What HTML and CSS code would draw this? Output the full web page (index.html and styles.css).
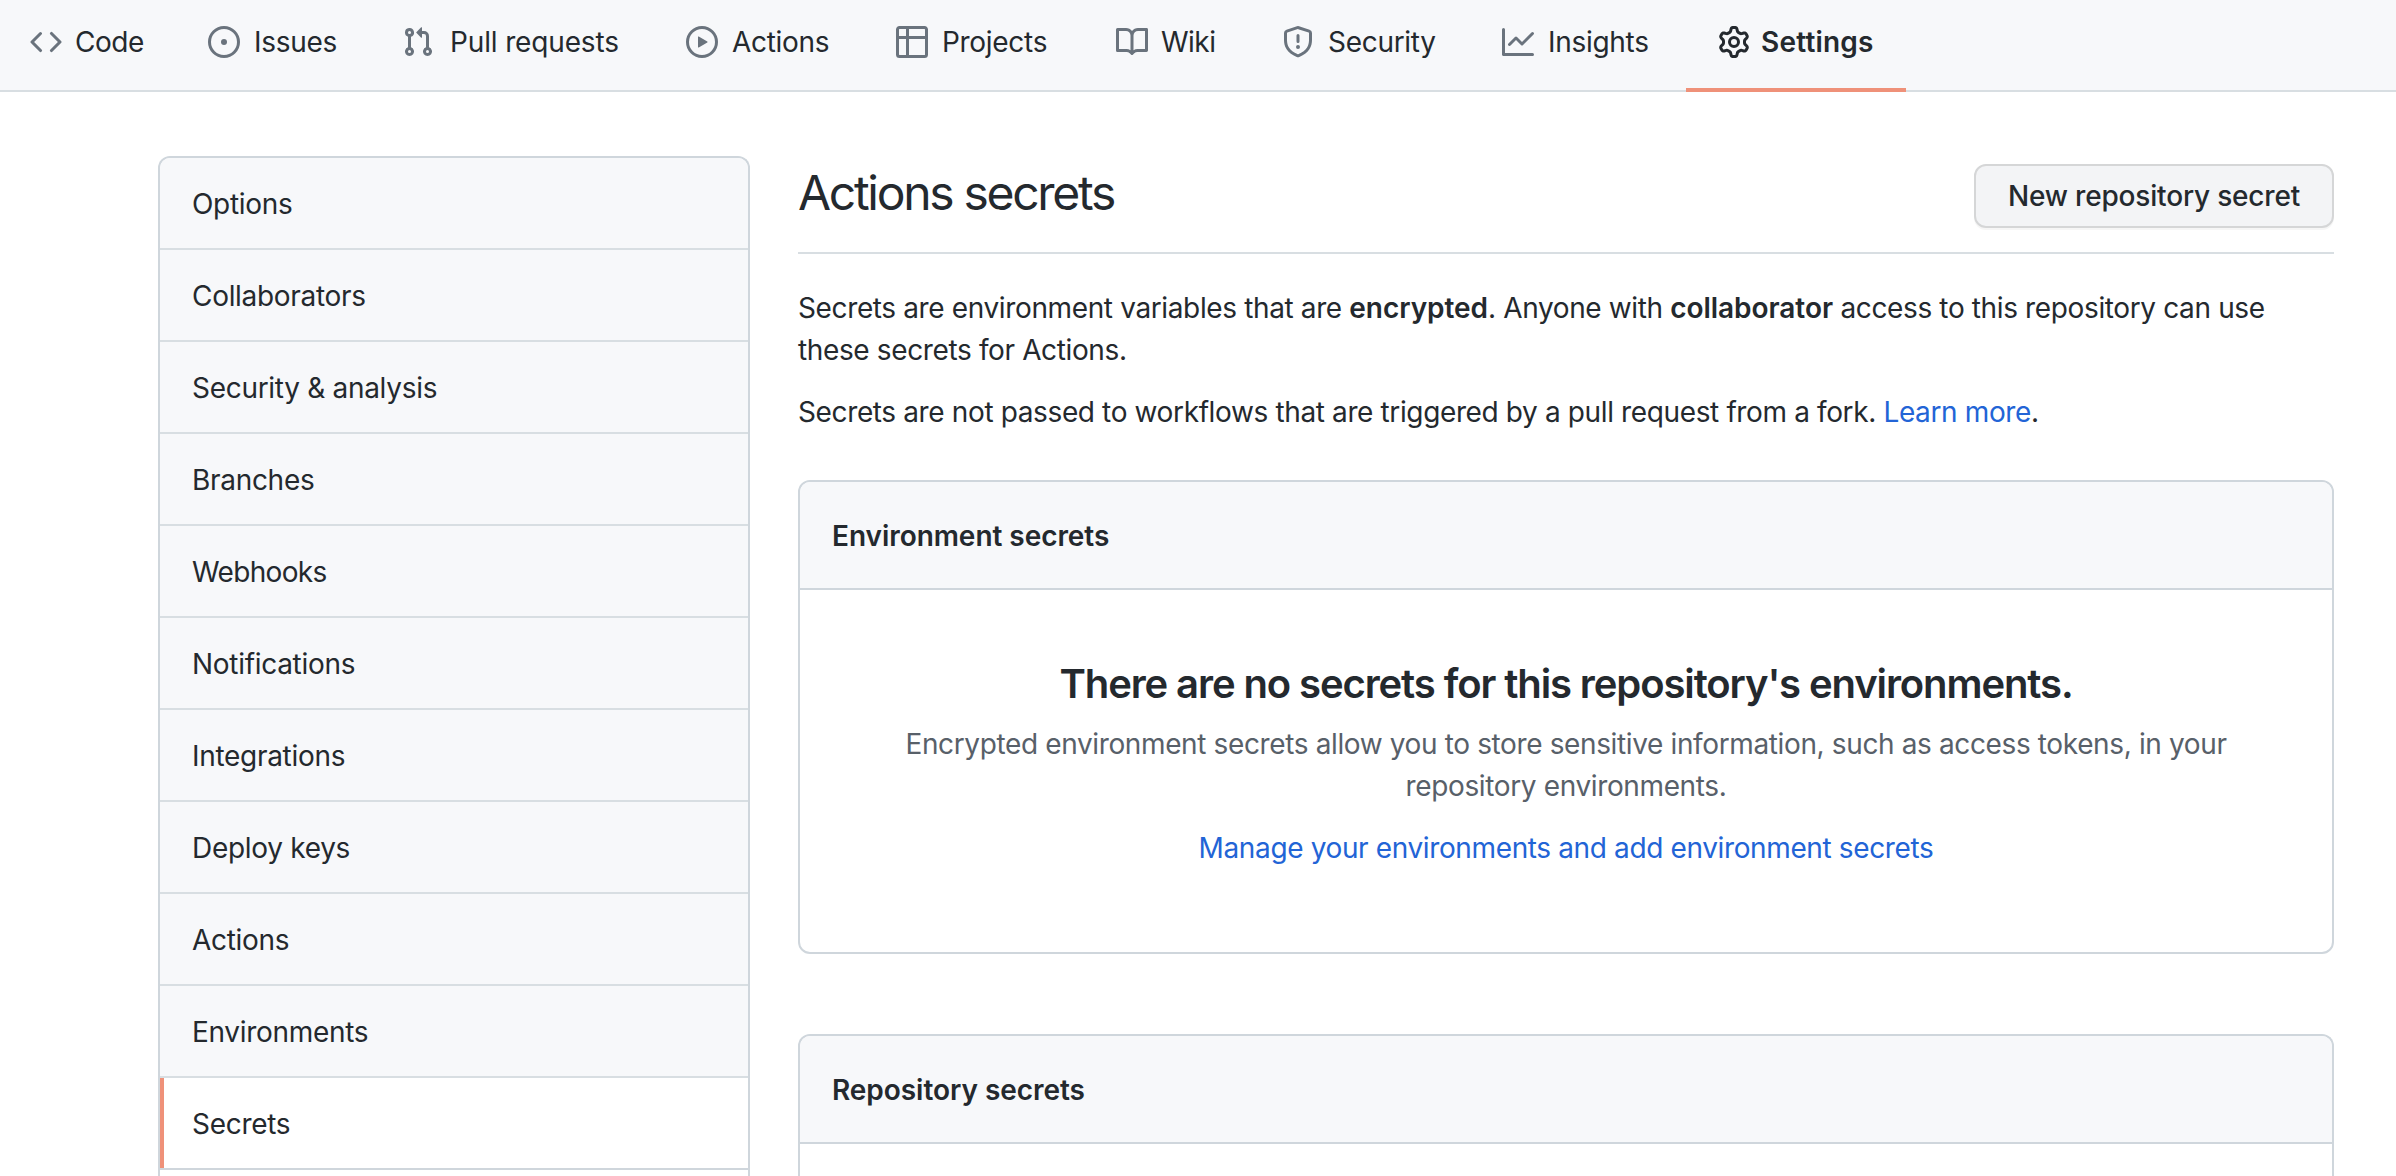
FILE: index.html
```
<!DOCTYPE html>
<html lang="en">
<head>
<meta charset="utf-8">
<title>Actions secrets</title>
<link rel="stylesheet" href="styles.css">
</head>
<body>
<nav class="repo-nav">
  <a class="tab tab-code"><svg class="icon" viewBox="0 0 16 16"><path fill-rule="evenodd" d="M4.72 3.22a.75.75 0 011.06 1.06L2.06 8l3.72 3.72a.75.75 0 11-1.06 1.06L.47 8.53a.75.75 0 010-1.06l4.25-4.25zm6.56 0a.75.75 0 10-1.06 1.06L13.94 8l-3.72 3.72a.75.75 0 101.06 1.06l4.25-4.25a.75.75 0 000-1.06l-4.25-4.25z"/></svg><span>Code</span></a>
  <a class="tab"><svg class="icon" viewBox="0 0 16 16"><path d="M8 9.5a1.5 1.5 0 100-3 1.5 1.5 0 000 3z"/><path fill-rule="evenodd" d="M8 0a8 8 0 100 16A8 8 0 008 0zM1.5 8a6.5 6.5 0 1113 0 6.5 6.5 0 01-13 0z"/></svg><span>Issues</span></a>
  <a class="tab tab-pulls"><svg class="icon" viewBox="0 0 16 16"><path fill-rule="evenodd" d="M7.177 3.073L9.573.677A.25.25 0 0110 .854v4.792a.25.25 0 01-.427.177L7.177 3.427a.25.25 0 010-.354zM3.75 2.5a.75.75 0 100 1.5.75.75 0 000-1.5zm-2.25.75a2.25 2.25 0 113 2.122v5.256a2.251 2.251 0 11-1.5 0V5.372A2.25 2.25 0 011.5 3.25zM11 2.5h-1V4h1a1 1 0 011 1v5.628a2.251 2.251 0 101.5 0V5A2.5 2.5 0 0011 2.5zm1 10.25a.75.75 0 111.5 0 .75.75 0 01-1.5 0zM3.75 12a.75.75 0 100 1.5.75.75 0 000-1.5z"/></svg><span>Pull requests</span></a>
  <a class="tab"><svg class="icon" viewBox="0 0 16 16"><path fill-rule="evenodd" d="M1.5 8a6.5 6.5 0 1113 0 6.5 6.5 0 01-13 0zM8 0a8 8 0 100 16A8 8 0 008 0zM6.379 5.227A.25.25 0 006 5.442v5.117a.25.25 0 00.379.214l4.264-2.559a.25.25 0 000-.428L6.379 5.227z"/></svg><span>Actions</span></a>
  <a class="tab"><svg class="icon" viewBox="0 0 16 16"><path fill-rule="evenodd" d="M0 1.75C0 .784.784 0 1.75 0h12.5C15.216 0 16 .784 16 1.75v3.585a.746.746 0 010 .83v8.085A1.75 1.75 0 0114.25 16H6.309a.748.748 0 01-1.118 0H1.75A1.75 1.75 0 010 14.25V6.165a.746.746 0 010-.83V1.75zM1.5 6.5v7.75c0 .138.112.25.25.25H5v-8H1.5zM5 5H1.5V1.75a.25.25 0 01.25-.25H5V5zm1.5 1.5v8h7.75a.25.25 0 00.25-.25V6.5h-8zM14.5 5h-8V1.5h7.75a.25.25 0 01.25.25V5z"/></svg><span>Projects</span></a>
  <a class="tab tab-wiki"><svg class="icon" viewBox="0 0 16 16"><path fill-rule="evenodd" d="M0 1.75A.75.75 0 01.75 1h4.253c1.227 0 2.317.59 3 1.501A3.744 3.744 0 0111.006 1h4.245a.75.75 0 01.75.75v10.5a.75.75 0 01-.75.75h-4.507a2.25 2.25 0 00-1.591.659l-.622.621a.75.75 0 01-1.06 0l-.622-.621A2.25 2.25 0 005.258 13H.75a.75.75 0 01-.75-.75V1.75zm8.755 3a2.25 2.25 0 012.25-2.25H14.5v9h-3.757c-.71 0-1.4.201-1.992.572l.004-7.322zm-1.504 7.324l.004-5.073-.002-2.253A2.25 2.25 0 005.003 2.5H1.5v9h3.757a3.75 3.75 0 011.994.574z"/></svg><span>Wiki</span></a>
  <a class="tab"><svg class="icon" viewBox="0 0 16 16"><path fill-rule="evenodd" d="M7.467.133a1.75 1.75 0 011.066 0l5.25 1.68A1.75 1.75 0 0115 3.48V7c0 1.566-.32 3.182-1.303 4.682-.983 1.498-2.585 2.813-5.032 3.855a1.7 1.7 0 01-1.33 0c-2.447-1.042-4.049-2.357-5.032-3.855C1.32 10.182 1 8.566 1 7V3.48a1.75 1.75 0 011.217-1.667l5.25-1.68zm.61 1.429a.25.25 0 00-.153 0l-5.25 1.68a.25.25 0 00-.174.238V7c0 1.358.275 2.666 1.057 3.86.784 1.194 2.121 2.34 4.366 3.297a.2.2 0 00.154 0c2.245-.956 3.582-2.104 4.366-3.298C13.225 9.666 13.5 8.36 13.5 7V3.48a.25.25 0 00-.174-.237l-5.25-1.68zM9 10.5a1 1 0 11-2 0 1 1 0 012 0zm-.25-5.75a.75.75 0 10-1.5 0v3a.75.75 0 001.5 0v-3z"/></svg><span>Security</span></a>
  <a class="tab"><svg class="icon" viewBox="0 0 16 16"><path fill-rule="evenodd" d="M1.5 1.75a.75.75 0 00-1.5 0v12.5c0 .414.336.75.75.75h14.5a.75.75 0 000-1.5H1.5V1.75zm14.28 2.53a.75.75 0 00-1.06-1.06L10 7.94 7.53 5.47a.75.75 0 00-1.06 0L3.22 8.72a.75.75 0 001.06 1.06L7 7.06l2.47 2.47a.75.75 0 001.06 0l5.25-5.25z"/></svg><span>Insights</span></a>
  <a class="tab tab-selected"><svg class="icon" viewBox="0 0 16 16"><path fill-rule="evenodd" d="M7.429 1.525a6.593 6.593 0 011.142 0c.036.003.108.036.137.146l.289 1.105c.147.56.55.967.997 1.189.174.086.341.183.501.29.417.278.97.423 1.53.27l1.102-.303c.11-.03.175.016.195.046.219.31.41.641.573.989.014.031.022.11-.059.19l-.815.806c-.411.406-.562.957-.53 1.456a4.588 4.588 0 010 .582c-.032.499.119 1.05.53 1.456l.815.806c.08.08.073.159.059.19a6.494 6.494 0 01-.573.99c-.02.029-.086.074-.195.045l-1.103-.303c-.559-.153-1.112-.008-1.529.27-.16.107-.327.204-.5.29-.449.222-.851.628-.998 1.189l-.289 1.105c-.029.11-.101.143-.137.146a6.613 6.613 0 01-1.142 0c-.036-.003-.108-.037-.137-.146l-.289-1.105c-.147-.56-.55-.967-.997-1.189a4.502 4.502 0 01-.501-.29c-.417-.278-.97-.423-1.53-.27l-1.102.303c-.11.03-.175-.016-.195-.046a6.492 6.492 0 01-.573-.989c-.014-.031-.022-.11.059-.19l.815-.806c.411-.406.562-.957.53-1.456a4.587 4.587 0 010-.582c.032-.499-.119-1.05-.53-1.456l-.815-.806c-.08-.08-.073-.159-.059-.19a6.44 6.44 0 01.573-.99c.02-.029.086-.075.195-.045l1.103.303c.559.153 1.112.008 1.529-.27.16-.107.327-.204.5-.29.449-.222.851-.628.998-1.189l.289-1.105c.029-.11.101-.143.137-.146zM8 0c-.236 0-.47.01-.701.03-.743.065-1.29.615-1.458 1.261l-.29 1.106c-.017.066-.078.158-.211.224a5.994 5.994 0 00-.668.386c-.123.082-.233.09-.3.071L3.27 2.776c-.644-.177-1.392.02-1.82.63a7.977 7.977 0 00-.704 1.217c-.315.675-.111 1.422.363 1.891l.815.806c.05.048.098.147.088.294a6.084 6.084 0 000 .772c.01.147-.038.246-.088.294l-.815.806c-.474.469-.678 1.216-.363 1.891.2.428.436.835.704 1.218.428.609 1.176.806 1.82.63l1.103-.303c.066-.019.176-.011.299.071.213.143.436.272.668.386.133.066.194.158.212.224l.289 1.106c.169.646.715 1.196 1.458 1.26a8.094 8.094 0 001.402 0c.743-.064 1.29-.614 1.458-1.26l.29-1.106c.017-.066.078-.158.211-.224a5.98 5.98 0 00.668-.386c.123-.082.233-.09.3-.071l1.102.302c.644.177 1.392-.02 1.82-.63.268-.382.505-.789.704-1.217.315-.675.111-1.422-.364-1.891l-.814-.806c-.05-.048-.098-.147-.088-.294a6.1 6.1 0 000-.772c-.01-.147.039-.246.088-.294l.814-.806c.475-.469.679-1.216.364-1.891a7.992 7.992 0 00-.704-1.218c-.428-.609-1.176-.806-1.82-.63l-1.103.303c-.066.019-.176.011-.299-.071a5.991 5.991 0 00-.668-.386c-.133-.066-.194-.158-.212-.224L10.16 1.29C9.99.645 9.444.095 8.701.031A8.094 8.094 0 008 0zm1.5 8a1.5 1.5 0 11-3 0 1.5 1.5 0 013 0zM11 8a3 3 0 11-6 0 3 3 0 016 0z"/></svg><span>Settings</span></a>
</nav>
<div class="page">
  <aside class="menu">
    <a class="menu-item">Options</a>
    <a class="menu-item">Collaborators</a>
    <a class="menu-item">Security &amp; analysis</a>
    <a class="menu-item">Branches</a>
    <a class="menu-item menu-item-webhooks">Webhooks</a>
    <a class="menu-item">Notifications</a>
    <a class="menu-item">Integrations</a>
    <a class="menu-item">Deploy keys</a>
    <a class="menu-item">Actions</a>
    <a class="menu-item">Environments</a>
    <a class="menu-item menu-item-selected">Secrets</a>
    <div class="submenu"></div>
  </aside>
  <main class="content">
    <header class="subhead">
      <h1 class="title">Actions secrets</h1>
      <button class="btn" type="button">New repository secret</button>
    </header>
    <p class="text">Secrets are environment variables that are <strong>encrypted</strong>. Anyone with <strong>collaborator</strong> access to this repository can use<br>these secrets for Actions.</p>
    <p class="text">Secrets are not passed to workflows that are triggered by a pull request from a fork. <a class="link">Learn more</a>.</p>
    <section class="box">
      <h2 class="box-header">Environment secrets</h2>
      <div class="blank">
        <h3 class="blank-title">There are no secrets for this repository's environments.</h3>
        <p class="blank-text">Encrypted environment secrets allow you to store sensitive information, such as access tokens, in your<br>repository environments.</p>
        <a class="link">Manage your environments and add environment secrets</a>
      </div>
    </section>
    <section class="box box-open">
      <h2 class="box-header">Repository secrets</h2>
    </section>
  </main>
</div>
</body>
</html>
```
FILE: styles.css
```
* {
  box-sizing: border-box;
}

body {
  margin: 0;
  height: 1176px;
  overflow: hidden;
  display: flex;
  flex-direction: column;
  background: #fff;
  color: #24292e;
  font: 400 28px/42px Inter, "Liberation Sans", sans-serif;
  letter-spacing: -0.37px;
}

h1, h2, h3, p {
  margin: 0;
}

strong {
  font-weight: 600;
  letter-spacing: -0.05px;
}

/* Repository tabs */
.repo-nav {
  flex: none;
  height: 92px;
  margin-left: -2px;
  display: grid;
  grid-template-columns: 178px 194px 284px 210px 220px 166px 220px 216px 220px;
  background: #f7f8fa;
  box-shadow: inset 0 -2px #d8dee2;
  white-space: nowrap;
}

.tab {
  display: flex;
  align-items: center;
  gap: 14px;
  padding: 0 0 8px 32px;
  letter-spacing: -0.3px;
}

.tab-code {
  gap: 13px;
  letter-spacing: -0.5px;
}

.tab-pulls {
  gap: 16px;
  letter-spacing: -0.15px;
}

.tab-wiki {
  gap: 13px;
  letter-spacing: -0.5px;
}

.tab-selected {
  gap: 11px;
  padding-bottom: 4px;
  border-bottom: 4px solid #ef9179;
  font-weight: 600;
  letter-spacing: 0.2px;
}

.icon {
  flex: none;
  width: 32px;
  height: 32px;
  fill: #6a737d;
}

.tab-selected .icon {
  fill: #24292e;
}

.page {
  flex: 1;
  min-height: 0;
  display: flex;
  gap: 48px;
  padding: 64px 62px 0 158px;
}

/* Settings menu */
.menu {
  flex: none;
  width: 592px;
  display: flex;
  flex-direction: column;
  border: 2px solid #cfd6dc;
  border-bottom: 0;
  border-radius: 12px 12px 0 0;
  overflow: hidden;
}

.menu-item {
  flex: none;
  display: flex;
  align-items: center;
  height: 92px;
  padding: 2px 0 0 32px;
  border-bottom: 2px solid #d8dee2;
  background: #f7f8fa;
  letter-spacing: -0.3px;
}

.menu-item-webhooks {
  letter-spacing: -0.65px;
}

.menu-item-selected {
  height: 90px;
  padding-left: 28px;
  border-left: 4px solid #ef9179;
  border-bottom: 0;
  background: #fff;
}

.submenu {
  flex: 1;
  border-top: 2px solid #cfd6dc;
}

/* Main column */
.content {
  flex: 1;
  min-width: 0;
  display: flex;
  flex-direction: column;
}

.subhead {
  flex: none;
  display: flex;
  justify-content: space-between;
  height: 98px;
  margin-bottom: 33px;
  padding-top: 8px;
  border-bottom: 2px solid #d8dee2;
}

.title {
  font-weight: 400;
  font-size: 48px;
  line-height: 58px;
  letter-spacing: -2.3px;
}

.btn {
  width: 360px;
  height: 64px;
  padding: 0;
  border: 2px solid #d5d6d7;
  border-radius: 12px;
  background: #f3f4f6;
  box-shadow: 0 2px 0 rgba(27, 31, 35, 0.04);
  color: inherit;
  font: 500 28px/40px Inter, "Liberation Sans", sans-serif;
  letter-spacing: -0.18px;
}

.text {
  margin-bottom: 20px;
  white-space: nowrap;
}

.link {
  color: #2264d6;
}

.box {
  flex: none;
  margin-top: 27px;
  border: 2px solid #cfd6dc;
  border-radius: 12px;
  overflow: hidden;
}

.box-open {
  flex: 1;
  margin-top: 80px;
  border-bottom: 0;
  border-radius: 12px 12px 0 0;
}

.box-header {
  height: 108px;
  padding: 33px 32px 0;
  border-bottom: 2px solid #cfd6dc;
  background: #f7f8fa;
  font-weight: 600;
  font-size: 28px;
  letter-spacing: -0.05px;
}

.blank {
  height: 362px;
  padding-top: 64px;
  text-align: center;
  white-space: nowrap;
}

.blank-title {
  margin-bottom: 9px;
  font-weight: 600;
  font-size: 40px;
  line-height: 60px;
  letter-spacing: -1.1px;
}

.blank-text {
  margin-bottom: 20px;
  color: #586069;
}
```
